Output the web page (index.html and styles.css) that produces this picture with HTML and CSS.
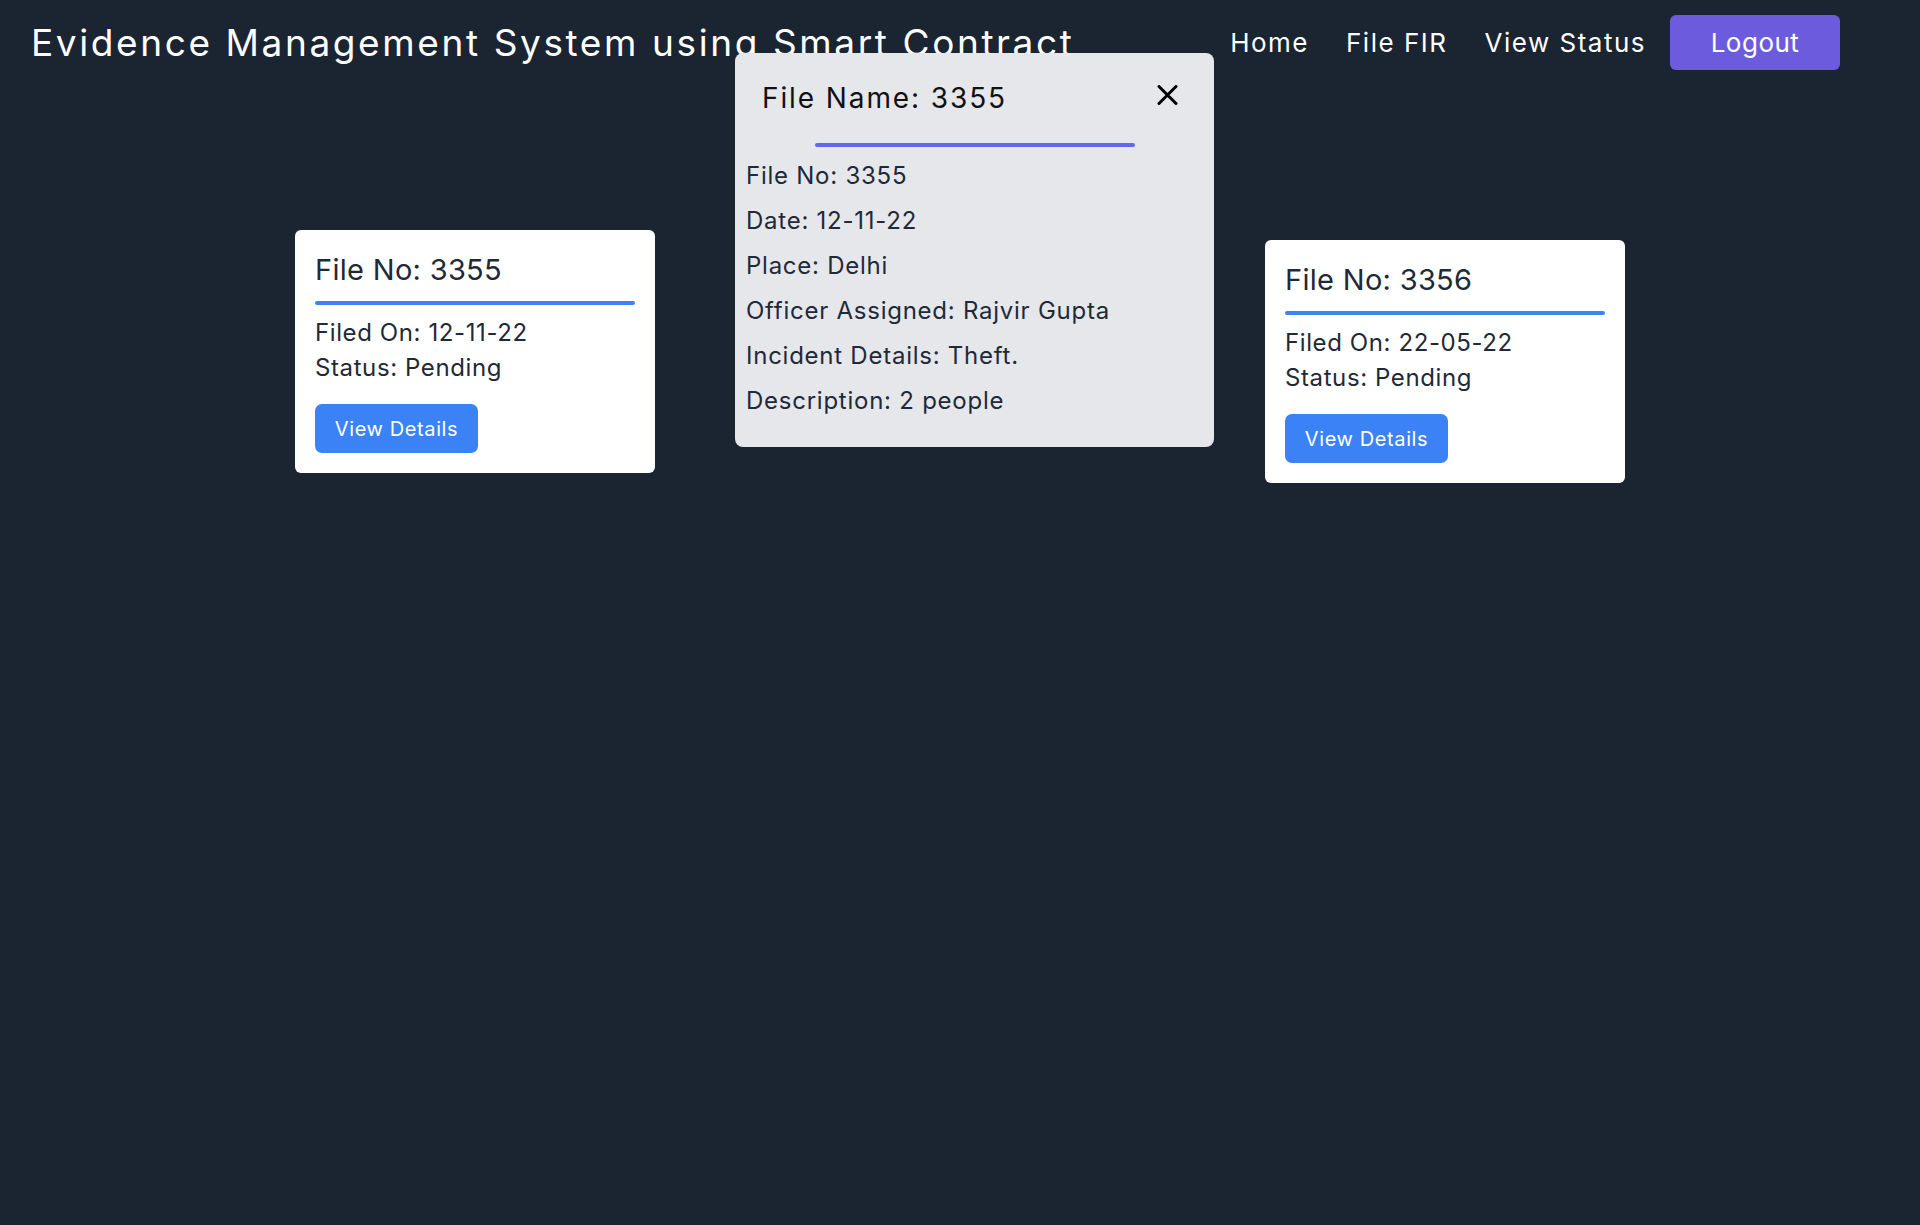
FILE: index.html
```html
<!DOCTYPE html>
<html lang="en">
<head>
<meta charset="utf-8">
<title>Evidence Management System</title>
<link rel="stylesheet" href="styles.css">
</head>
<body>
<header class="topbar">
  <h1 class="brand">Evidence Management System using Smart Contract</h1>
  <nav class="nav">
    <a class="nav-link" href="#">Home</a>
    <a class="nav-link" href="#">File FIR</a>
    <a class="nav-link" href="#">View Status</a>
    <button class="logout" type="button">Logout</button>
  </nav>
</header>

<main class="cards">
  <article class="card">
    <h2 class="card-title">File No: 3355</h2>
    <div class="card-rule"></div>
    <p class="card-line">Filed On: 12-11-22</p>
    <p class="card-line">Status: Pending</p>
    <button class="details-btn" type="button">View Details</button>
  </article>
  <article class="card card-lower">
    <h2 class="card-title">File No: 3356</h2>
    <div class="card-rule"></div>
    <p class="card-line">Filed On: 22-05-22</p>
    <p class="card-line">Status: Pending</p>
    <button class="details-btn" type="button">View Details</button>
  </article>
</main>

<div class="modal">
  <div class="modal-head">
    <h2 class="modal-title">File Name: 3355</h2>
    <button class="close" type="button" aria-label="Close">
      <svg width="21" height="20" viewBox="0 0 21 20"><path d="M2 1.5 L19 18.5 M19 1.5 L2 18.5" stroke="#000" stroke-width="3" stroke-linecap="round" fill="none"/></svg>
    </button>
  </div>
  <div class="modal-rule"></div>
  <div class="modal-body">
    <p class="modal-line">File No: 3355</p>
    <p class="modal-line">Date: 12-11-22</p>
    <p class="modal-line">Place: Delhi</p>
    <p class="modal-line">Officer Assigned: Rajvir Gupta</p>
    <p class="modal-line">Incident Details: Theft.</p>
    <p class="modal-line">Description: 2 people</p>
  </div>
</div>
</body>
</html>
```

FILE: styles.css
```css
* { box-sizing: border-box; }

html, body {
  margin: 0;
  padding: 0;
}

body {
  background: #1b2431;
  min-height: 1225px;
  font-family: Inter, "DejaVu Sans", sans-serif;
  color: #1f2937;
  position: relative;
}

.topbar {
  display: flex;
  align-items: center;
  justify-content: space-between;
  height: 85px;
  padding: 0 80px 0 31px;
}

.brand {
  margin: 0;
  font-size: 37px;
  line-height: 40px;
  font-weight: 400;
  color: #ffffff;
  letter-spacing: 2.6px;
}

.nav {
  display: flex;
  align-items: center;
}

.nav-link {
  color: #ffffff;
  text-decoration: none;
  font-size: 26px;
  line-height: 32px;
  letter-spacing: 1.5px;
  margin-right: 37px;
}

.nav-link:nth-child(3) {
  margin-right: 24px;
}

.logout {
  width: 170px;
  height: 55px;
  border: none;
  border-radius: 6px;
  background: #6c5cdd;
  color: #ffffff;
  font-family: inherit;
  font-size: 26px;
  letter-spacing: 0.5px;
  padding: 0;
}

.cards {
  display: flex;
  justify-content: center;
  align-items: flex-start;
  gap: 610px;
  padding-top: 145px;
}

.card {
  width: 360px;
  background: #ffffff;
  border-radius: 6px;
  padding: 20px;
}

.card-lower {
  margin-top: 10px;
}

.card-title {
  margin: 0;
  font-size: 29px;
  line-height: 40px;
  font-weight: 400;
  letter-spacing: 0.3px;
  color: #1f2937;
}

.card-rule {
  height: 4px;
  margin-top: 11px;
  border-radius: 2px;
  background: #3b82f6;
}

.card-line {
  margin: 0;
  font-size: 24px;
  line-height: 34.5px;
  letter-spacing: 0.6px;
}

.card-rule + .card-line {
  margin-top: 11px;
}

.details-btn {
  display: block;
  margin-top: 19px;
  width: 163px;
  height: 49px;
  padding: 0;
  border: none;
  border-radius: 7px;
  background: #3b82f6;
  color: #ffffff;
  font-family: inherit;
  font-size: 20px;
  letter-spacing: 0.6px;
}

.modal {
  position: absolute;
  top: 53px;
  left: 735px;
  width: 479px;
  background: #e5e7eb;
  border-radius: 8px;
  padding-bottom: 24px;
}

.modal-head {
  display: flex;
  justify-content: space-between;
  align-items: flex-start;
  padding: 25px 36px 0 27px;
}

.modal-title {
  margin: 0;
  font-size: 28px;
  line-height: 40px;
  font-weight: 400;
  letter-spacing: 1.9px;
  color: #111111;
}

.close {
  margin-top: 7px;
  padding: 0;
  border: none;
  background: none;
  width: 21px;
  height: 20px;
  line-height: 0;
}

.modal-rule {
  width: 320px;
  height: 4px;
  margin: 25px auto 0;
  border-radius: 2px;
  background: #6366f1;
}

.modal-body {
  padding: 6px 0 0 11px;
}

.modal-line {
  margin: 0;
  font-size: 24px;
  line-height: 45px;
  letter-spacing: 0.75px;
  color: #1f2937;
}
```
